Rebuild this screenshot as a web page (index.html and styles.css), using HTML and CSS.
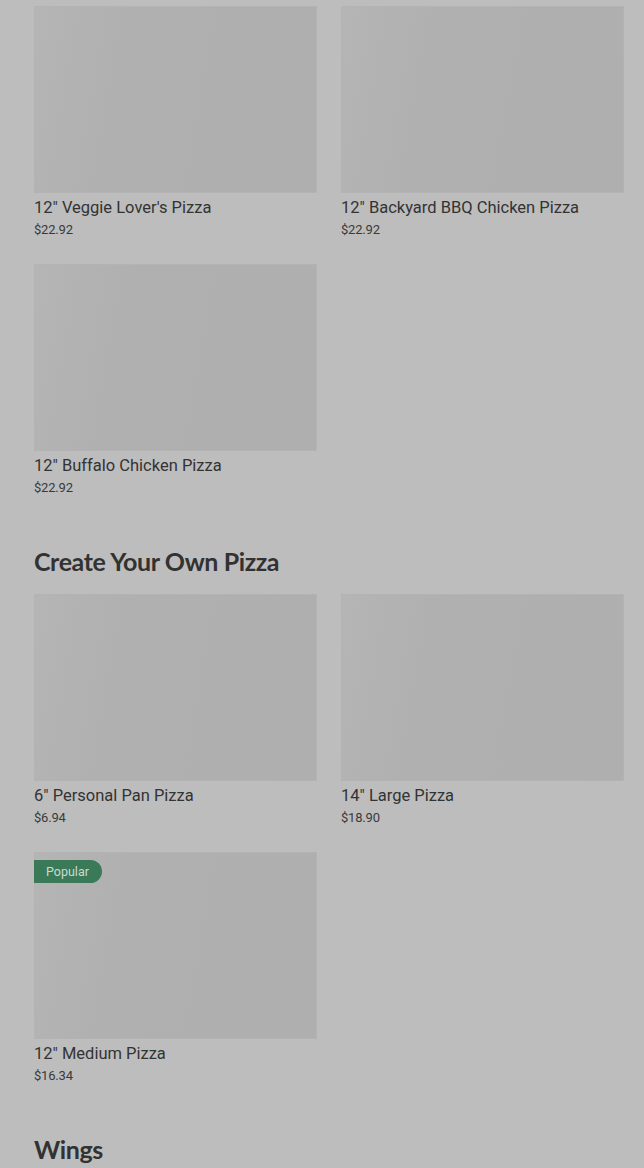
FILE: index.html
```html
<!DOCTYPE html>
<html>
<head>
<meta charset="utf-8">
<link rel="stylesheet" href="styles.css">
</head>
<body>
<main class="menu">
  <section class="section first">
    <div class="grid">
      <div class="card"><div class="thumb"></div><div class="name">12" Veggie Lover's Pizza</div><div class="price">$22.92</div></div>
      <div class="card"><div class="thumb"></div><div class="name">12" Backyard BBQ Chicken Pizza</div><div class="price">$22.92</div></div>
      <div class="card"><div class="thumb"></div><div class="name">12" Buffalo Chicken Pizza</div><div class="price">$22.92</div></div>
    </div>
  </section>
  <section class="section">
    <h2 class="heading">Create Your Own Pizza</h2>
    <div class="grid">
      <div class="card"><div class="thumb"></div><div class="name">6" Personal Pan Pizza</div><div class="price">$6.94</div></div>
      <div class="card"><div class="thumb"></div><div class="name">14" Large Pizza</div><div class="price">$18.90</div></div>
      <div class="card"><div class="thumb"><span class="badge">Popular</span></div><div class="name">12" Medium Pizza</div><div class="price">$16.34</div></div>
    </div>
  </section>
  <section class="section">
    <h2 class="heading">Wings</h2>
  </section>
</main>
</body>
</html>
```
FILE: styles.css
```css
html, body {
  margin: 0;
  padding: 0;
  background: #bdbdbd;
}
body {
  font-family: Roboto, "Liberation Sans", sans-serif;
  color: #333333;
  overflow: hidden;
  height: 1168px;
}
.menu {
  padding: 6px 20px 0 34px;
}
.section {
  margin-top: 47px;
}
.section.first {
  margin-top: 0;
}
.heading {
  margin: 0 0 17px;
  font-family: Lato, "Open Sans", sans-serif;
  font-weight: 700;
  font-size: 25px;
  line-height: 32px;
  letter-spacing: -0.4px;
  color: #323232;
}
.grid {
  display: grid;
  grid-template-columns: 283px 283px;
  column-gap: 24px;
  row-gap: 24px;
}
.card {
  display: flex;
  flex-direction: column;
}
.thumb {
  position: relative;
  height: 187px;
  background: linear-gradient(100deg, #b5b5b5 0%, #b0b0b0 30%, #afafaf 100%);
  box-shadow: inset 0 0 0 1px #b3b3b3;
}
.name {
  margin-top: 3px;
  font-size: 16.5px;
  line-height: 24px;
  font-weight: 400;
  color: #333333;
}
.price {
  font-size: 13px;
  line-height: 20px;
  color: #3a3a3a;
  letter-spacing: -0.2px;
}
.badge {
  position: absolute;
  left: 0;
  top: 8px;
  height: 23px;
  padding: 0 13px 0 12px;
  display: flex;
  align-items: center;
  background: #3b7a58;
  color: #c9dcd0;
  font-size: 12.5px;
  border-radius: 0 12px 12px 0;
}
```
